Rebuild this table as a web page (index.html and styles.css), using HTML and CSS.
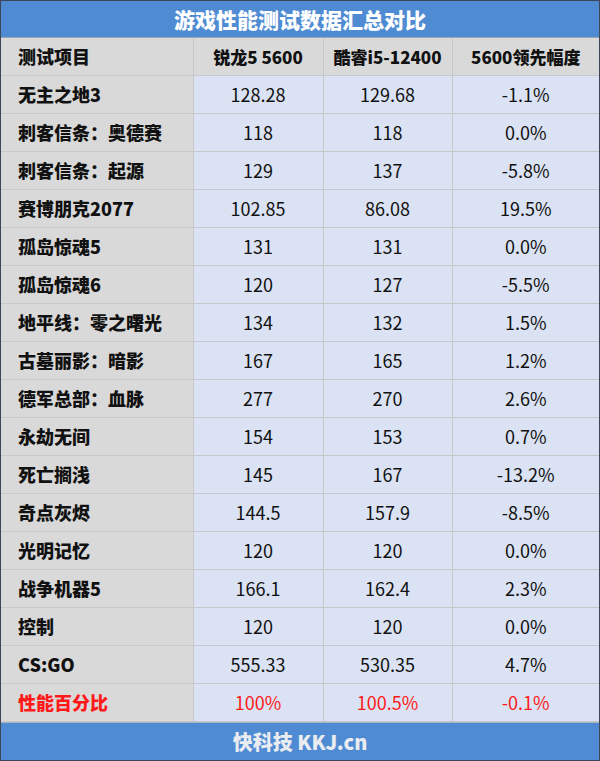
FILE: index.html
```html
<!DOCTYPE html>
<html lang="zh">
<head>
<meta charset="utf-8">
<link rel="stylesheet" href="styles.css">
</head>
<body>
<div class="frame">
  <div class="title">游戏性能测试数据汇总对比</div>
  <table class="data">
    <colgroup><col class="c1"><col class="c2"><col class="c3"><col class="c4"></colgroup>
    <thead>
      <tr><th class="name">测试项目</th><th>锐龙5 5600</th><th>酷睿i5-12400</th><th>5600领先幅度</th></tr>
    </thead>
    <tbody>
      <tr><th class="name">无主之地3</th><td>128.28</td><td>129.68</td><td>-1.1%</td></tr>
      <tr><th class="name">刺客信条：奥德赛</th><td>118</td><td>118</td><td>0.0%</td></tr>
      <tr><th class="name">刺客信条：起源</th><td>129</td><td>137</td><td>-5.8%</td></tr>
      <tr><th class="name">赛博朋克2077</th><td>102.85</td><td>86.08</td><td>19.5%</td></tr>
      <tr><th class="name">孤岛惊魂5</th><td>131</td><td>131</td><td>0.0%</td></tr>
      <tr><th class="name">孤岛惊魂6</th><td>120</td><td>127</td><td>-5.5%</td></tr>
      <tr><th class="name">地平线：零之曙光</th><td>134</td><td>132</td><td>1.5%</td></tr>
      <tr><th class="name">古墓丽影：暗影</th><td>167</td><td>165</td><td>1.2%</td></tr>
      <tr><th class="name">德军总部：血脉</th><td>277</td><td>270</td><td>2.6%</td></tr>
      <tr><th class="name">永劫无间</th><td>154</td><td>153</td><td>0.7%</td></tr>
      <tr><th class="name">死亡搁浅</th><td>145</td><td>167</td><td>-13.2%</td></tr>
      <tr><th class="name">奇点灰烬</th><td>144.5</td><td>157.9</td><td>-8.5%</td></tr>
      <tr><th class="name">光明记忆</th><td>120</td><td>120</td><td>0.0%</td></tr>
      <tr><th class="name">战争机器5</th><td>166.1</td><td>162.4</td><td>2.3%</td></tr>
      <tr><th class="name">控制</th><td>120</td><td>120</td><td>0.0%</td></tr>
      <tr><th class="name">CS:GO</th><td>555.33</td><td>530.35</td><td>4.7%</td></tr>
      <tr class="total"><th class="name">性能百分比</th><td>100%</td><td>100.5%</td><td>-0.1%</td></tr>
    </tbody>
  </table>
  <div class="footer">快科技 KKJ.cn</div>
</div>
</body>
</html>
```
FILE: styles.css
```css
html, body {
  margin: 0;
  padding: 0;
  background: #ffffff;
}
.frame {
  width: 598px;
  height: 759px;
  border: 1px solid #3c4656;
  display: flex;
  flex-direction: column;
  font-family: "Noto Sans CJK SC", "Noto Sans", sans-serif;
  background: #4f8bd2;
}
.title {
  height: 36px;
  border-bottom: 1px solid #9aa7b8;
  background: #4f8bd2;
  color: #ffffff;
  font-size: 21px;
  font-weight: 900;
  line-height: 36px;
  text-align: center;
}
.data {
  border-collapse: collapse;
  table-layout: fixed;
  width: 598px;
}
.c1 { width: 192px; }
.c2 { width: 130px; }
.c3 { width: 129px; }
.c4 { width: 147px; }
.data th, .data td {
  height: 37px;
  padding: 0;
  border-right: 1px solid #c6c8cc;
  border-bottom: 1px solid #c6c8cc;
  font-size: 17px;
  color: #111111;
  text-align: center;
  line-height: 37px;
  white-space: nowrap;
}
.data tr > :last-child { border-right: none; }
.data thead th {
  background: #d9d9d9;
  font-weight: 900;
}
.data tbody th {
  background: #d9d9d9;
  font-weight: 900;
}
.data .name {
  text-align: left;
  padding-left: 17px;
  font-size: 18px;
}
.data td {
  background: #dae2f3;
  font-weight: normal;
  font-size: 18px;
}
.data .total th, .data .total td {
  color: #ff1a1a;
}
.footer {
  height: 37px;
  border-top: 1px solid #a9b3c2;
  background: #4f8bd2;
  color: #e9ecf0;
  font-size: 20px;
  font-weight: 900;
  line-height: 37px;
  text-align: center;
}
```
